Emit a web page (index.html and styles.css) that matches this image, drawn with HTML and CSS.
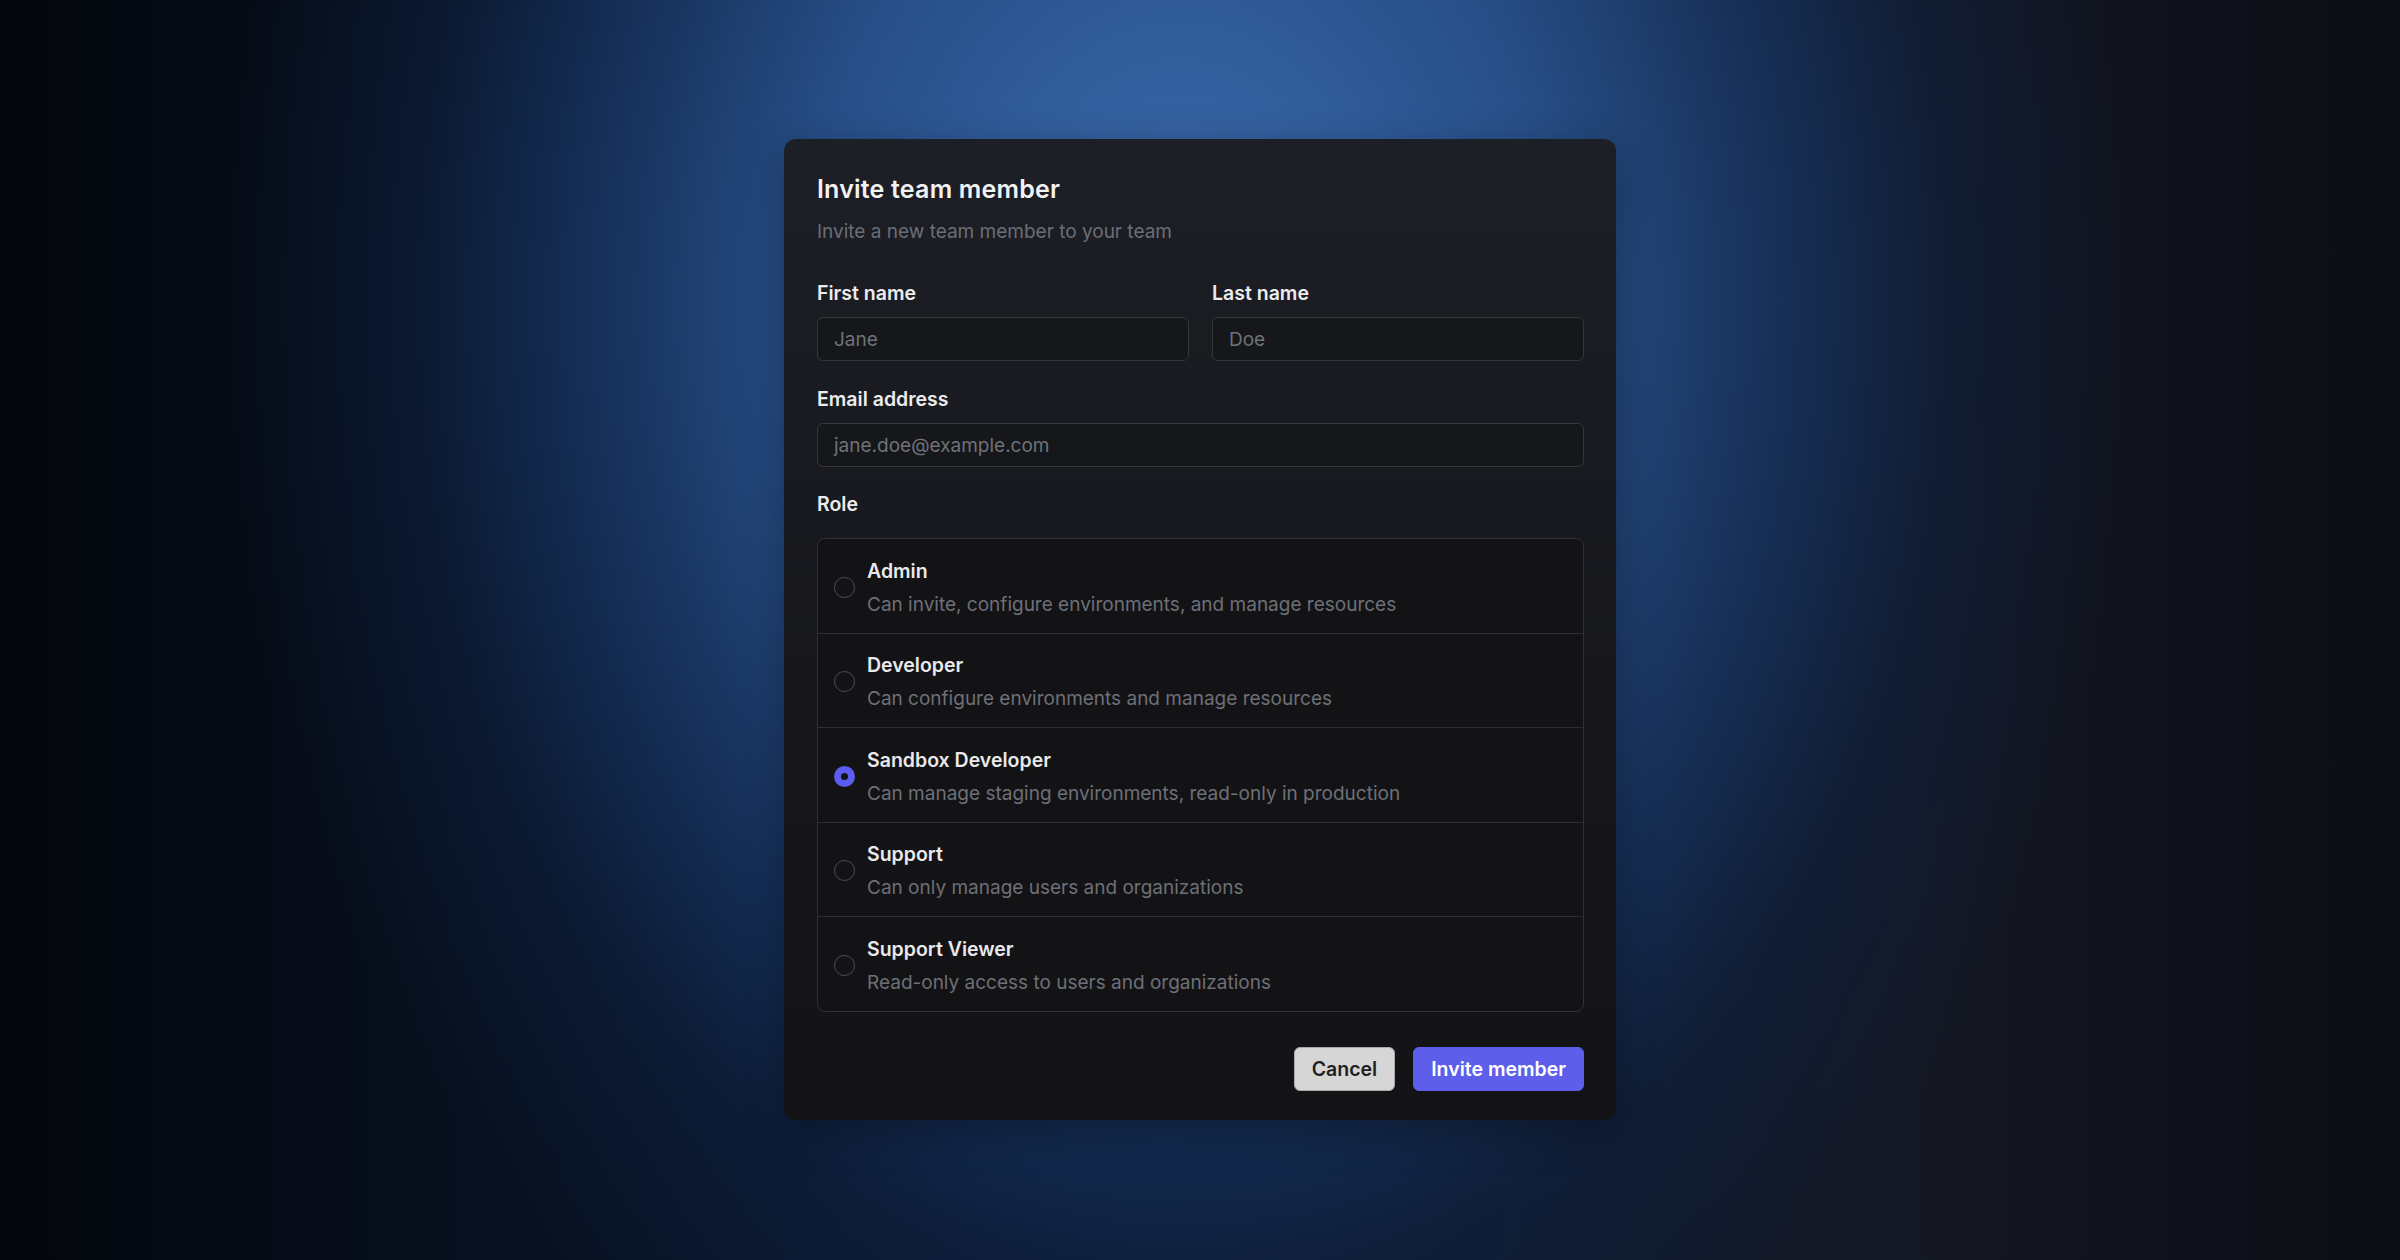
FILE: index.html
```html
<!DOCTYPE html>
<html lang="en">
<head>
<meta charset="utf-8">
<title>Invite team member</title>
<link rel="stylesheet" href="styles.css">
</head>
<body>
<div class="stage">
  <div class="modal">
    <h1 class="title">Invite team member</h1>
    <p class="subtitle">Invite a new team member to your team</p>

    <div class="row-2">
      <div class="field">
        <label class="label">First name</label>
        <div class="input"><span class="ph">Jane</span></div>
      </div>
      <div class="field">
        <label class="label">Last name</label>
        <div class="input"><span class="ph">Doe</span></div>
      </div>
    </div>

    <div class="field field-email">
      <label class="label">Email address</label>
      <div class="input"><span class="ph">jane.doe@example.com</span></div>
    </div>

    <div class="label role-label">Role</div>
    <div class="roles">
      <div class="role">
        <span class="radio"></span>
        <div class="role-text">
          <div class="role-name">Admin</div>
          <div class="role-desc">Can invite, configure environments, and manage resources</div>
        </div>
      </div>
      <div class="role">
        <span class="radio"></span>
        <div class="role-text">
          <div class="role-name">Developer</div>
          <div class="role-desc">Can configure environments and manage resources</div>
        </div>
      </div>
      <div class="role">
        <span class="radio checked"></span>
        <div class="role-text">
          <div class="role-name">Sandbox Developer</div>
          <div class="role-desc">Can manage staging environments, read-only in production</div>
        </div>
      </div>
      <div class="role">
        <span class="radio"></span>
        <div class="role-text">
          <div class="role-name">Support</div>
          <div class="role-desc">Can only manage users and organizations</div>
        </div>
      </div>
      <div class="role">
        <span class="radio"></span>
        <div class="role-text">
          <div class="role-name">Support Viewer</div>
          <div class="role-desc">Read-only access to users and organizations</div>
        </div>
      </div>
    </div>

    <div class="actions">
      <button class="btn btn-cancel">Cancel</button>
      <button class="btn btn-primary">Invite member</button>
    </div>
  </div>
</div>
</body>
</html>
```

FILE: styles.css
```css
* { box-sizing: border-box; }
html, body { margin: 0; padding: 0; }
body {
  width: 2400px;
  height: 1260px;
  overflow: hidden;
  font-family: Inter, "Noto Sans", sans-serif;
  background: #070b14;
}
.stage {
  width: 2400px;
  height: 1260px;
  display: flex;
  justify-content: center;
  align-items: flex-start;
  padding-top: 139px;
  background:
    radial-gradient(ellipse 960px 1250px at 1180px 300px, rgba(58,106,170,1) 0%, rgba(48,92,154,1) 22%, rgba(40,80,138,0.95) 40%, rgba(24,54,100,0.8) 62%, rgba(14,32,64,0.55) 80%, rgba(8,16,32,0) 100%),
    linear-gradient(90deg, #03060c 0%, #07101f 20%, #0b1830 40%, #0f1a2e 60%, #141824 80%, #0b0d14 100%);
}
.modal {
  width: 832px;
  height: 981px;
  border-radius: 12px;
  padding: 34px 32px 29px 33px;
  background: linear-gradient(180deg, #1d1f26 0%, #18191e 40%, #131316 100%);
  box-shadow: 0 12px 40px rgba(0,0,0,0.3);
  display: flex;
  flex-direction: column;
}
.title {
  margin: 0;
  font-size: 25px;
  line-height: 32px;
  font-weight: 600;
  letter-spacing: 0.2px;
  color: #f2f2f3;
}
.subtitle {
  margin: 13px 0 0;
  font-size: 19px;
  line-height: 28px;
  color: #6b6e75;
}
.row-2 {
  display: grid;
  grid-template-columns: 1fr 1fr;
  gap: 23px;
  margin-top: 35px;
}
.field { display: flex; flex-direction: column; }
.field-email { margin-top: 26px; }
.label {
  font-size: 19.5px;
  line-height: 24px;
  font-weight: 600;
  color: #ececee;
  margin-bottom: 12px;
}
.input {
  height: 44px;
  border: 1px solid #35373d;
  border-radius: 6px;
  background: #16171a;
  display: flex;
  align-items: center;
  padding: 0 16px;
}
.ph {
  font-size: 19px;
  color: #6f7279;
}
.role-label { margin-top: 25px; margin-bottom: 22px; }
.roles {
  border: 1px solid #2f3136;
  border-radius: 8px;
  background: #131316;
}
.role {
  display: flex;
  align-items: center;
  gap: 12px;
  height: 94.5px;
  padding: 0 16px;
  border-top: 1px solid #2c2e33;
}
.role:first-child { border-top: none; height: 93.5px; }
.radio {
  width: 21px;
  height: 21px;
  border-radius: 50%;
  border: 1.5px solid #4c4e55;
  flex: none;
  margin-top: 3px;
}
.radio.checked {
  border: 7px solid #5b5cf0;
  background: #141418;
}
.role-text { display: flex; flex-direction: column; gap: 6px; margin-top: 4px; }
.role-name {
  font-size: 19.5px;
  line-height: 28px;
  font-weight: 600;
  color: #e9e9eb;
}
.role-desc {
  font-size: 19px;
  line-height: 28px;
  color: #6d7077;
}
.actions {
  margin-top: auto;
  display: flex;
  justify-content: flex-end;
  gap: 18px;
}
.btn {
  height: 44px;
  border-radius: 6px;
  padding: 0 17px;
  font-family: inherit;
  font-size: 19.5px;
  font-weight: 600;
}
.btn-cancel {
  background: #d6d6d7;
  border: 1px solid #a9a9ab;
  color: #1f1f22;
}
.btn-primary {
  background: #5d5ee9;
  border: 1px solid #5d5ee9;
  color: #ffffff;
}
```
